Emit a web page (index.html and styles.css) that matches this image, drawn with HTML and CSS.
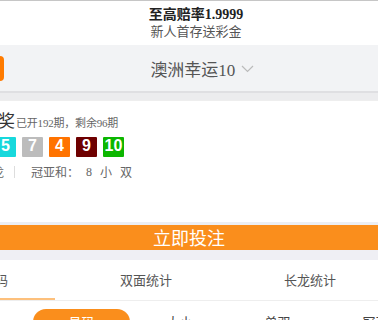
FILE: index.html
```
<!DOCTYPE html>
<html>
<head>
    <meta charset="utf-8">
    <title>澳洲幸运10</title>
    <link rel="stylesheet" href="styles.css">
</head>
<body>
    <div class="page">
        <!-- Promo header -->
        <div class="promo">
            <div class="promo-title">至高赔率1.9999</div>
            <div class="promo-sub">新人首存送彩金</div>
        </div>

        <!-- Lottery picker -->
        <div class="picker">
            <button class="back-btn"></button>
            <div class="picker-title">澳洲幸运10
                <svg class="chev" width="13" height="8" viewBox="0 0 13 8"><path d="M1 1 L6.5 6.5 L12 1" fill="none" stroke="#bbb" stroke-width="1.2"/></svg>
            </div>
        </div>
        <div class="picker-shadow"></div>

        <!-- Latest draw -->
        <div class="draw">
            <div class="draw-head">
                <span class="draw-name">第20240192期开奖</span>
                <span class="draw-info">已开192期，剩余96期</span>
            </div>
            <div class="balls">
                <span class="ball c3">3</span>
                <span class="ball c1">1</span>
                <span class="ball c6">6</span>
                <span class="ball c8">8</span>
                <span class="ball c2">2</span>
                <span class="ball c5">5</span>
                <span class="ball c7">7</span>
                <span class="ball c4">4</span>
                <span class="ball c9">9</span>
                <span class="ball c10">10</span>
            </div>
            <div class="draw-stats">
                <span class="lh">龙 虎 龙 虎 龙</span>
                <span class="sep"></span>
                <span class="gyh">冠亚和：</span>
                <span class="num">8</span>
                <span>小</span>
                <span>双</span>
            </div>
        </div>

        <div class="bet-line"></div>
        <button class="bet-btn">立即投注</button>
        <div class="gray-gap"></div>

        <!-- Tabs -->
        <div class="tabs">
            <div class="tab active">开奖号码</div>
            <div class="tab">双面统计</div>
            <div class="tab">长龙统计</div>
        </div>
        <div class="subtabs">
            <div class="subtab">总数</div>
            <div class="subtab active">号码</div>
            <div class="subtab">大小</div>
            <div class="subtab">单双</div>
            <div class="subtab">冠亚</div>
        </div>
    </div>
</body>
</html>
```

FILE: styles.css
```
body { margin: 0; background: #fff; font-family: "Liberation Serif", "Noto Sans CJK SC", serif; overflow: hidden; }
.page { width: 378px; overflow: hidden; }

/* Promo header */
.promo {
    border-top: 1px solid #c6c6c6;
    padding: 5px 0 4px 14px;
    text-align: center;
    height: 35px;
}
.promo-title { font-size: 14px; line-height: 18px; font-weight: bold; color: #222; }
.promo-sub { font-size: 13px; line-height: 16px; color: #555; margin-top: 0; }

/* Lottery picker */
.picker {
    display: flex;
    align-items: center;
    height: 46px;
    background: #f2f3f5;
}
.back-btn {
    width: 34px;
    height: 25px;
    margin-left: -30px;
    border: none;
    border-radius: 4px;
    background: #ff7b00;
    flex-shrink: 0;
}
.picker-title {
    flex: 1;
    text-align: center;
    padding-left: 22px;
    font-size: 17px;
    color: #555;
}
.chev { margin-left: 1px; vertical-align: 3px; }
.picker-shadow {
    height: 7px;
    border-top: 2px solid #dfdfe2;
    background: #ececee;
}

/* Latest draw */
.draw {
    border-top: 1px solid #eee;
    margin-left: -146px;
    padding: 8px 0 42px 6px;
}
.draw-head { display: flex; align-items: baseline; height: 22px; line-height: 22px; }
.draw-name { font-size: 17px; color: #333; width: 155px; text-align: right; font-family: "Noto Sans CJK SC", sans-serif; }
.draw-info { font-size: 11px; color: #666; margin-left: 1px; letter-spacing: -0.2px; }
.balls { display: flex; gap: 6px; margin-top: 6px; }
.ball {
    width: 21px;
    height: 20px;
    line-height: 20px;
    text-align: center;
    color: #fff;
    font: bold 16px "Liberation Sans", sans-serif;
    border-radius: 1px;
}
.c1 { background: #e6de00; }
.c2 { background: #0092dd; }
.c3 { background: #4b4b4b; }
.c4 { background: #ff7300; }
.c5 { background: #17d8dc; }
.c6 { background: #5234ff; }
.c7 { background: #bcbcbc; }
.c8 { background: #ff2600; }
.c9 { background: #6e0000; }
.c10 { background: #0cb600; }
.draw-stats {
    display: flex;
    align-items: center;
    margin-top: 7px;
    height: 16px;
    font-size: 12px;
    color: #666;
}
.draw-stats span { margin-right: 8px; }
.draw-stats .lh { width: 144px; text-align: right; margin-right: 10px; }
.draw-stats .sep { width: 1px; height: 12px; background: #ddd; margin-right: 16px; }
.draw-stats .gyh { margin-right: 7px; }
.draw-stats .num { margin-right: 8px; }

/* Bet button */
.bet-line { height: 3px; background: #eceef3; }
.bet-btn {
    display: block;
    width: 100%;
    height: 25px;
    border: none;
    background: #fa8e1c;
    color: #fff;
    font-family: "Noto Sans CJK SC", sans-serif;
    font-size: 18px;
    line-height: 25px;
    padding: 0;
}
.gray-gap { height: 10px; background: #efeff4; }

/* Tabs */
.tabs {
    display: flex;
    margin-left: -100px;
    width: 492px;
    height: 40px;
    border-bottom: 1px solid #eee;
}
.tab {
    flex: 1;
    text-align: center;
    line-height: 40px;
    font-size: 13px;
    color: #555;
    font-family: "Noto Sans CJK SC", sans-serif;
    position: relative;
}
.tab.active::after {
    content: "";
    position: absolute;
    left: 9px;
    right: 9px;
    bottom: 0;
    height: 2px;
    background: #fdc07c;
}
.subtabs {
    display: flex;
    gap: 1px;
    margin-left: -65px;
    padding-top: 8px;
}
.subtab {
    width: 97px;
    height: 26px;
    line-height: 26px;
    text-align: center;
    font-size: 13px;
    color: #444;
    font-family: "Noto Sans CJK SC", sans-serif;
    flex-shrink: 0;
}
.subtab.active { background: #fa8e1c; color: #fff; border-radius: 13px; }
```
